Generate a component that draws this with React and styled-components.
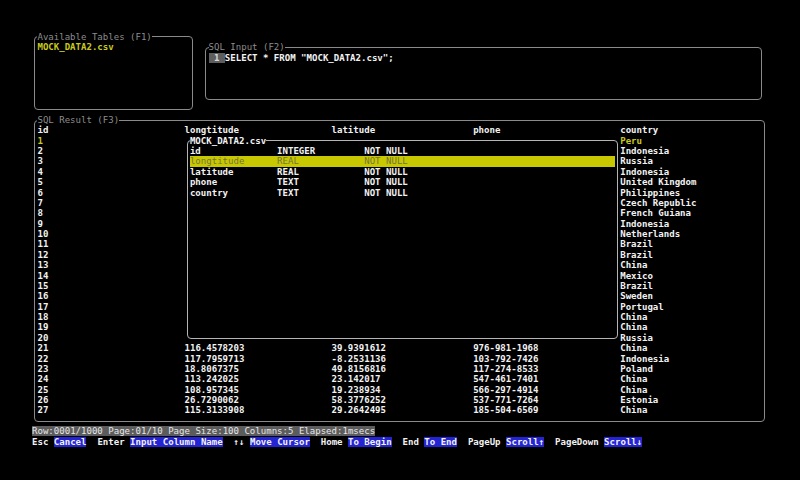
import React from 'react';
import styled, { createGlobalStyle } from 'styled-components';

// one terminal row
const R = 10.385;

const GlobalStyle = createGlobalStyle`
  html, body {
    margin: 0;
    padding: 0;
    background: #000;
  }
`;

// rows 1-20 sit under the schema popup, only id and country show
const rows = [
  ['1', '', '', '', 'Peru'],
  ['2', '', '', '', 'Indonesia'],
  ['3', '', '', '', 'Russia'],
  ['4', '', '', '', 'Indonesia'],
  ['5', '', '', '', 'United Kingdom'],
  ['6', '', '', '', 'Philippines'],
  ['7', '', '', '', 'Czech Republic'],
  ['8', '', '', '', 'French Guiana'],
  ['9', '', '', '', 'Indonesia'],
  ['10', '', '', '', 'Netherlands'],
  ['11', '', '', '', 'Brazil'],
  ['12', '', '', '', 'Brazil'],
  ['13', '', '', '', 'China'],
  ['14', '', '', '', 'Mexico'],
  ['15', '', '', '', 'Brazil'],
  ['16', '', '', '', 'Sweden'],
  ['17', '', '', '', 'Portugal'],
  ['18', '', '', '', 'China'],
  ['19', '', '', '', 'China'],
  ['20', '', '', '', 'Russia'],
  ['21', '116.4578203', '39.9391612', '976-981-1968', 'China'],
  ['22', '117.7959713', '-8.2531136', '103-792-7426', 'Indonesia'],
  ['23', '18.8067375', '49.8156816', '117-274-8533', 'Poland'],
  ['24', '113.242025', '23.142017', '547-461-7401', 'China'],
  ['25', '108.957345', '19.238934', '566-297-4914', 'China'],
  ['26', '26.7290062', '58.3776252', '537-771-7264', 'Estonia'],
  ['27', '115.3133908', '29.2642495', '185-504-6569', 'China'],
];

const schema = [
  ['id', 'INTEGER', 'NOT NULL'],
  ['longtitude', 'REAL', 'NOT NULL'],
  ['latitude', 'REAL', 'NOT NULL'],
  ['phone', 'TEXT', 'NOT NULL'],
  ['country', 'TEXT', 'NOT NULL'],
];

const help = [
  ['Esc', 'Cancel'],
  ['Enter', 'Input Column Name'],
  ['↑↓', 'Move Cursor'],
  ['Home', 'To Begin'],
  ['End', 'To End'],
  ['PageUp', 'Scroll↑'],
  ['PageDown', 'Scroll↓'],
];

const App = () => (
  <>
    <GlobalStyle />
    <Screen>
      <TopRow>
        <Panel $cols={29} $rows={7}>
          <Legend>Available Tables (F1)</Legend>
          <Line $tone="yellow">MOCK_DATA2.csv</Line>
        </Panel>
        <Panel $cols={102} $rows={5} $top={1}>
          <Legend>SQL Input (F2)</Legend>
          <Line>
            <LineNo> 1 </LineNo>
            SELECT * FROM "MOCK_DATA2.csv";
          </Line>
        </Panel>
      </TopRow>

      <ResultZone>
        <Panel $cols={134} $rows={29}>
          <Legend>SQL Result (F3)</Legend>
          <ResultBody>
            <ResultRow>
              <span>id</span>
              <span>longtitude</span>
              <span>latitude</span>
              <span>phone</span>
              <span>country</span>
            </ResultRow>
            {rows.map((r, i) => (
              <ResultRow key={r[0]} $active={i === 0}>
                <span>{r[0]}</span>
                <span>{r[1]}</span>
                <span>{r[2]}</span>
                <span>{r[3]}</span>
                <span>{r[4]}</span>
              </ResultRow>
            ))}

            <Overlay>
              <Panel $cols={79} $rows={19} $light>
                <Legend $tone="bright">MOCK_DATA2.csv</Legend>
                {schema.map((s, i) => (
                  <SchemaRow key={s[0]} $selected={i === 1}>
                    <span>{s[0]}</span>
                    <span>{s[1]}</span>
                    <span>{s[2]}</span>
                  </SchemaRow>
                ))}
              </Panel>
            </Overlay>
          </ResultBody>
        </Panel>
      </ResultZone>

      <Line>
        <Status>Row:0001/1000 Page:01/10 Page Size:100 Columns:5 Elapsed:1msecs</Status>
      </Line>
      <Line>
        {help.map(([k, label], i) => (
          <React.Fragment key={k}>
            {i > 0 && '  '}
            <Key>{k}</Key> <Label>{label}</Label>
          </React.Fragment>
        ))}
      </Line>
    </Screen>
  </>
);

const Screen = styled.div`
  width: 800px;
  height: 480px;
  box-sizing: border-box;
  padding: 31.8px 32px 0 32px;
  background: #000;
  color: #f2f2f2;
  font-family: 'DejaVu Sans Mono', 'Liberation Mono', monospace;
  font-size: 9.05px;
  font-weight: bold;
  line-height: ${R}px;
  display: flex;
  flex-direction: column;
  overflow: hidden;
`;

const TopRow = styled.div`
  display: flex;
  align-items: flex-start;
  gap: calc(2ch - 1px);
  height: ${8 * R}px;
`;

const ResultZone = styled.div`
  height: ${30 * R}px;
`;

const Panel = styled.fieldset`
  box-sizing: border-box;
  min-width: 0;
  margin: ${(p) => (p.$top || 0) * R}px 0 0 calc(0.5ch - 0.5px);
  padding: 0 calc(0.5ch - 0.5px);
  width: calc(${(p) => p.$cols}ch + 1px);
  height: ${(p) => (p.$rows + 0.5) * R + 0.5}px;
  border: 1px solid ${(p) => (p.$light ? '#b4b4b4' : '#8a8a8a')};
  border-radius: 4px;
`;

const Legend = styled.legend`
  padding: 0;
  margin: 0;
  height: ${R}px;
  line-height: ${R}px;
  font-weight: ${(p) => (p.$tone === 'bright' ? 'bold' : 'normal')};
  color: ${(p) => (p.$tone === 'bright' ? '#f2f2f2' : '#8c8c8c')};
`;

const Line = styled.div`
  height: ${R}px;
  white-space: pre;
  color: ${(p) => (p.$tone === 'yellow' ? '#c9c91f' : '#f2f2f2')};
`;

const LineNo = styled.span`
  background: #5e5e5e;
  color: #d8d8d8;
`;

const ResultBody = styled.div`
  position: relative;
`;

const ResultRow = styled.div`
  display: grid;
  grid-template-columns: 27ch 27ch 26ch 27ch 1fr;
  height: ${R}px;
  white-space: pre;
  color: ${(p) => (p.$active ? '#c9c91f' : '#f2f2f2')};
`;

// the schema popup covers whole terminal cells over the result grid
const Overlay = styled.div`
  position: absolute;
  left: 27ch;
  top: ${R}px;
  width: 80ch;
  height: ${20 * R}px;
  background: #000;
`;

const SchemaRow = styled.div`
  display: grid;
  grid-template-columns: 16ch 16ch 1fr;
  height: ${R}px;
  white-space: pre;
  background: ${(p) => (p.$selected ? '#c8c800' : 'transparent')};
  color: ${(p) => (p.$selected ? '#74743c' : '#f2f2f2')};
  font-weight: ${(p) => (p.$selected ? 'normal' : 'bold')};
`;

const Status = styled.span`
  background: #5c5c5c;
  color: #e6e6e6;
  font-weight: normal;
`;

const Key = styled.span`
  color: #f2f2f2;
`;

const Label = styled.span`
  background: #2424d4;
  color: #f2f2f2;
`;

export default App;
